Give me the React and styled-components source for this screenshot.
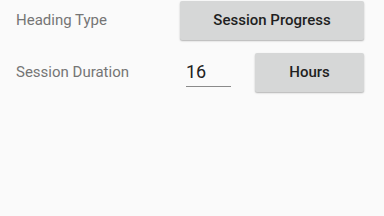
import React from "react";
import styled, { createGlobalStyle } from "styled-components";

const Global = createGlobalStyle`
  html, body { margin: 0; padding: 0; background: #fafafa; }
  body { font-family: Roboto, "Noto Sans", sans-serif; width: 384px; height: 216px; overflow: hidden; }
`;

const Form = styled.div`
  display: grid;
  grid-template-columns: 164px 1fr;
  row-gap: 12px;
  padding: 0 20px 0 16px;
  align-items: center;
`;

const Label = styled.div`
  font-size: 15px;
  color: #757575;
  line-height: 39px;
  padding-top: 1px;
`;

const Button = styled.button`
  height: 39px;
  width: ${(p) => p.$width || "100%"};
  border: none;
  border-radius: 2px;
  background: #d6d7d7;
  box-shadow: 0 1px 2px rgba(0, 0, 0, 0.22), 0 1px 1px rgba(0, 0, 0, 0.08);
  font-family: Roboto, sans-serif;
  font-weight: 500;
  font-size: 15px;
  color: #1f1f1f;
  padding: 0;
  margin: 0;
`;

const DurationCell = styled.div`
  display: flex;
  align-items: center;
  justify-content: space-between;
`;

const NumberField = styled.div`
  margin-left: 6px;
  margin-bottom: 1px;
  width: 45px;
  height: 30px;
  box-sizing: border-box;
  border-bottom: 1.5px solid #8a8a8a;
  font-size: 18px;
  color: #212121;
  display: flex;
  align-items: flex-end;
  padding: 0 0 5px 0;
  line-height: 18px;
`;

export default function App() {
  return (
    <>
      <Global />
      <Form>
        <Label>Heading Type</Label>
        <Button>Session Progress</Button>
        <Label>Session Duration</Label>
        <DurationCell>
          <NumberField>16</NumberField>
          <Button $width="109px">Hours</Button>
        </DurationCell>
      </Form>
    </>
  );
}
